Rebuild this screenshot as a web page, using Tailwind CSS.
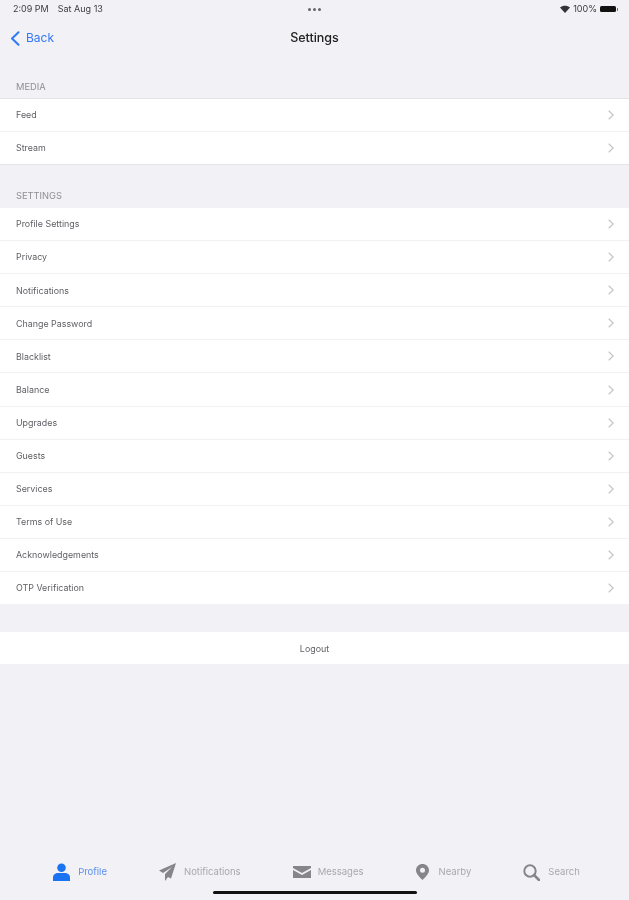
<!doctype html>
<html>
<head>
<meta charset="utf-8">
<script src="https://cdn.jsdelivr.net/npm/@tailwindcss/browser@4"></script>
</head>
<body class="m-0">
<div class="relative flex h-[900px] w-[629px] flex-col overflow-hidden bg-[#f1f1f6] font-['Inter','Liberation_Sans',sans-serif] text-[#5f5f64] blur-[0.6px]">
  <!-- status bar -->
  <div class="relative flex h-[18px] items-center justify-between pl-[13px] pr-[11px] text-[9px] text-[#3c3c40]">
    <div class="flex gap-[9px]"><span>2:09 PM</span><span>Sat Aug 13</span></div>
    <div class="absolute left-[308px] top-[8px] flex gap-[2px]">
      <span class="size-[3px] rounded-full bg-[#666]"></span><span class="size-[3px] rounded-full bg-[#666]"></span><span class="size-[3px] rounded-full bg-[#666]"></span>
    </div>
    <div class="flex items-center gap-[3px]">
      <svg width="10" height="8" viewBox="0 0 10 8"><path d="M0 2.600C2.800 0 7.200 0 10 2.600L5 8z" fill="#333"/></svg>
      <span>100%</span>
      <span class="flex items-center gap-[1px]"><span class="h-[6px] w-[16px] rounded-[1.5px] bg-[#111]"></span><span class="h-[3px] w-[1px] bg-[#777]"></span></span>
    </div>
  </div>
  <!-- nav bar -->
  <div class="relative flex h-[38px] items-center justify-center pt-[2px]">
    <div class="absolute left-[10px] top-[11px] flex items-center gap-[6px] text-[12px] text-[#3478f6]">
      <svg width="10" height="15" viewBox="0 0 10 15" fill="none"><path d="M8.500 1.200 2 7.500l6.500 6.300" stroke="#2f7bf0" stroke-width="2" stroke-linecap="round" stroke-linejoin="round"/></svg>
      <span>Back</span>
    </div>
    <span class="text-[12.500px] font-medium text-[#222]">Settings</span>
  </div>
  <!-- media -->
  <div class="flex h-[42px] items-end pb-[4px] pl-[16px] text-[9.300px] text-[#8e8e93]">MEDIA</div>
  <div class="border-y border-[#e4e4e8] bg-white text-[8.900px]">
    <div class="flex h-[33px] items-center justify-between border-b border-[#f1f1f4] pl-[16px] pr-[15px]"><span>Feed</span><svg width="6" height="10" viewBox="0 0 6 10" fill="none"><path d="m.7.700 4.500 4.300L.7 9.300" stroke="#c4c4c8" stroke-width="1.200"/></svg></div>
    <div class="flex h-[32px] items-center justify-between pl-[16px] pr-[15px]"><span>Stream</span><svg width="6" height="10" viewBox="0 0 6 10" fill="none"><path d="m.7.700 4.500 4.300L.7 9.300" stroke="#c4c4c8" stroke-width="1.200"/></svg></div>
  </div>
  <!-- settings -->
  <div class="flex h-[43px] items-end pb-[5px] pl-[16px] text-[9.300px] text-[#8e8e93]">SETTINGS</div>
  <div class="bg-white text-[8.900px]">
    <div class="flex h-[33.100px] items-center justify-between border-b border-[#f1f1f4] pl-[16px] pr-[15px]"><span>Profile Settings</span><svg width="6" height="10" viewBox="0 0 6 10" fill="none"><path d="m.7.700 4.500 4.300L.7 9.300" stroke="#c4c4c8" stroke-width="1.200"/></svg></div>
    <div class="flex h-[33.100px] items-center justify-between border-b border-[#f1f1f4] pl-[16px] pr-[15px]"><span>Privacy</span><svg width="6" height="10" viewBox="0 0 6 10" fill="none"><path d="m.7.700 4.500 4.300L.7 9.300" stroke="#c4c4c8" stroke-width="1.200"/></svg></div>
    <div class="flex h-[33.100px] items-center justify-between border-b border-[#f1f1f4] pl-[16px] pr-[15px]"><span>Notifications</span><svg width="6" height="10" viewBox="0 0 6 10" fill="none"><path d="m.7.700 4.500 4.300L.7 9.300" stroke="#c4c4c8" stroke-width="1.200"/></svg></div>
    <div class="flex h-[33.100px] items-center justify-between border-b border-[#f1f1f4] pl-[16px] pr-[15px]"><span>Change Password</span><svg width="6" height="10" viewBox="0 0 6 10" fill="none"><path d="m.7.700 4.500 4.300L.7 9.300" stroke="#c4c4c8" stroke-width="1.200"/></svg></div>
    <div class="flex h-[33.100px] items-center justify-between border-b border-[#f1f1f4] pl-[16px] pr-[15px]"><span>Blacklist</span><svg width="6" height="10" viewBox="0 0 6 10" fill="none"><path d="m.7.700 4.500 4.300L.7 9.300" stroke="#c4c4c8" stroke-width="1.200"/></svg></div>
    <div class="flex h-[33.100px] items-center justify-between border-b border-[#f1f1f4] pl-[16px] pr-[15px]"><span>Balance</span><svg width="6" height="10" viewBox="0 0 6 10" fill="none"><path d="m.7.700 4.500 4.300L.7 9.300" stroke="#c4c4c8" stroke-width="1.200"/></svg></div>
    <div class="flex h-[33.100px] items-center justify-between border-b border-[#f1f1f4] pl-[16px] pr-[15px]"><span>Upgrades</span><svg width="6" height="10" viewBox="0 0 6 10" fill="none"><path d="m.7.700 4.500 4.300L.7 9.300" stroke="#c4c4c8" stroke-width="1.200"/></svg></div>
    <div class="flex h-[33.100px] items-center justify-between border-b border-[#f1f1f4] pl-[16px] pr-[15px]"><span>Guests</span><svg width="6" height="10" viewBox="0 0 6 10" fill="none"><path d="m.7.700 4.500 4.300L.7 9.300" stroke="#c4c4c8" stroke-width="1.200"/></svg></div>
    <div class="flex h-[33.100px] items-center justify-between border-b border-[#f1f1f4] pl-[16px] pr-[15px]"><span>Services</span><svg width="6" height="10" viewBox="0 0 6 10" fill="none"><path d="m.7.700 4.500 4.300L.7 9.300" stroke="#c4c4c8" stroke-width="1.200"/></svg></div>
    <div class="flex h-[33.100px] items-center justify-between border-b border-[#f1f1f4] pl-[16px] pr-[15px]"><span>Terms of Use</span><svg width="6" height="10" viewBox="0 0 6 10" fill="none"><path d="m.7.700 4.500 4.300L.7 9.300" stroke="#c4c4c8" stroke-width="1.200"/></svg></div>
    <div class="flex h-[33.100px] items-center justify-between border-b border-[#f1f1f4] pl-[16px] pr-[15px]"><span>Acknowledgements</span><svg width="6" height="10" viewBox="0 0 6 10" fill="none"><path d="m.7.700 4.500 4.300L.7 9.300" stroke="#c4c4c8" stroke-width="1.200"/></svg></div>
    <div class="flex h-[32px] items-center justify-between pl-[16px] pr-[15px]"><span>OTP Verification</span><svg width="6" height="10" viewBox="0 0 6 10" fill="none"><path d="m.7.700 4.500 4.300L.7 9.300" stroke="#c4c4c8" stroke-width="1.200"/></svg></div>
  </div>
  <!-- logout -->
  <div class="mt-[28px] flex h-[32px] items-center justify-center bg-white pt-[1px] text-[8.900px]">Logout</div>
  <!-- tab bar -->
  <div class="mt-auto flex h-[58px] items-start justify-center gap-[52px] pl-[4px] pt-[21px] text-[9.500px] text-[#a8a8ad]">
    <div class="flex h-[18px] items-center gap-[8px] text-[#5b8ff0]">
      <svg width="17" height="18" viewBox="0 0 17 18"><circle cx="8.500" cy="4.800" r="4.300" fill="#1a74f2"/><path d="M0 18v-3.500C0 11.500 2.500 10 5 10h7c2.500 0 5 1.500 5 4.500V18z" fill="#1a74f2"/></svg>
      <span>Profile</span>
    </div>
    <div class="flex h-[18px] items-center gap-[8px]">
      <svg width="17" height="18" viewBox="0 0 17 18"><path d="M17 0 0 7.500l4 2.500L13 4 6 11v7l3-4 3 1.500z" fill="#85858a"/></svg>
      <span>Notifications</span>
    </div>
    <div class="flex h-[18px] items-center gap-[7px]">
      <svg width="18" height="12" viewBox="0 0 18 12"><path d="M0 0h18v2L9 7 0 2zM0 4l9 5 9-5v8H0z" fill="#85858a"/></svg>
      <span>Messages</span>
    </div>
    <div class="flex h-[18px] items-center gap-[10px]">
      <svg width="13" height="16" viewBox="0 0 13 16"><path fill-rule="evenodd" d="M6.500 0C10 0 13 2.700 13 6.300 13 10 9 13.500 6.500 16 4 13.500 0 10 0 6.300 0 2.700 3 0 6.500 0zm0 3.800a2.500 2.500 0 1 0 0 5 2.500 2.500 0 0 0 0-5z" fill="#85858a"/></svg>
      <span>Nearby</span>
    </div>
    <div class="flex h-[18px] items-center gap-[8px]">
      <svg width="17" height="17" viewBox="0 0 17 17" fill="none"><circle cx="7" cy="7" r="5.700" stroke="#85858a" stroke-width="2"/><path d="m11 11 5 5" stroke="#85858a" stroke-width="2.500" stroke-linecap="round"/></svg>
      <span>Search</span>
    </div>
  </div>
  <div class="absolute left-[213px] top-[891px] h-[3px] w-[204px] rounded-full bg-[#111]"></div>
</div>
</body>
</html>
